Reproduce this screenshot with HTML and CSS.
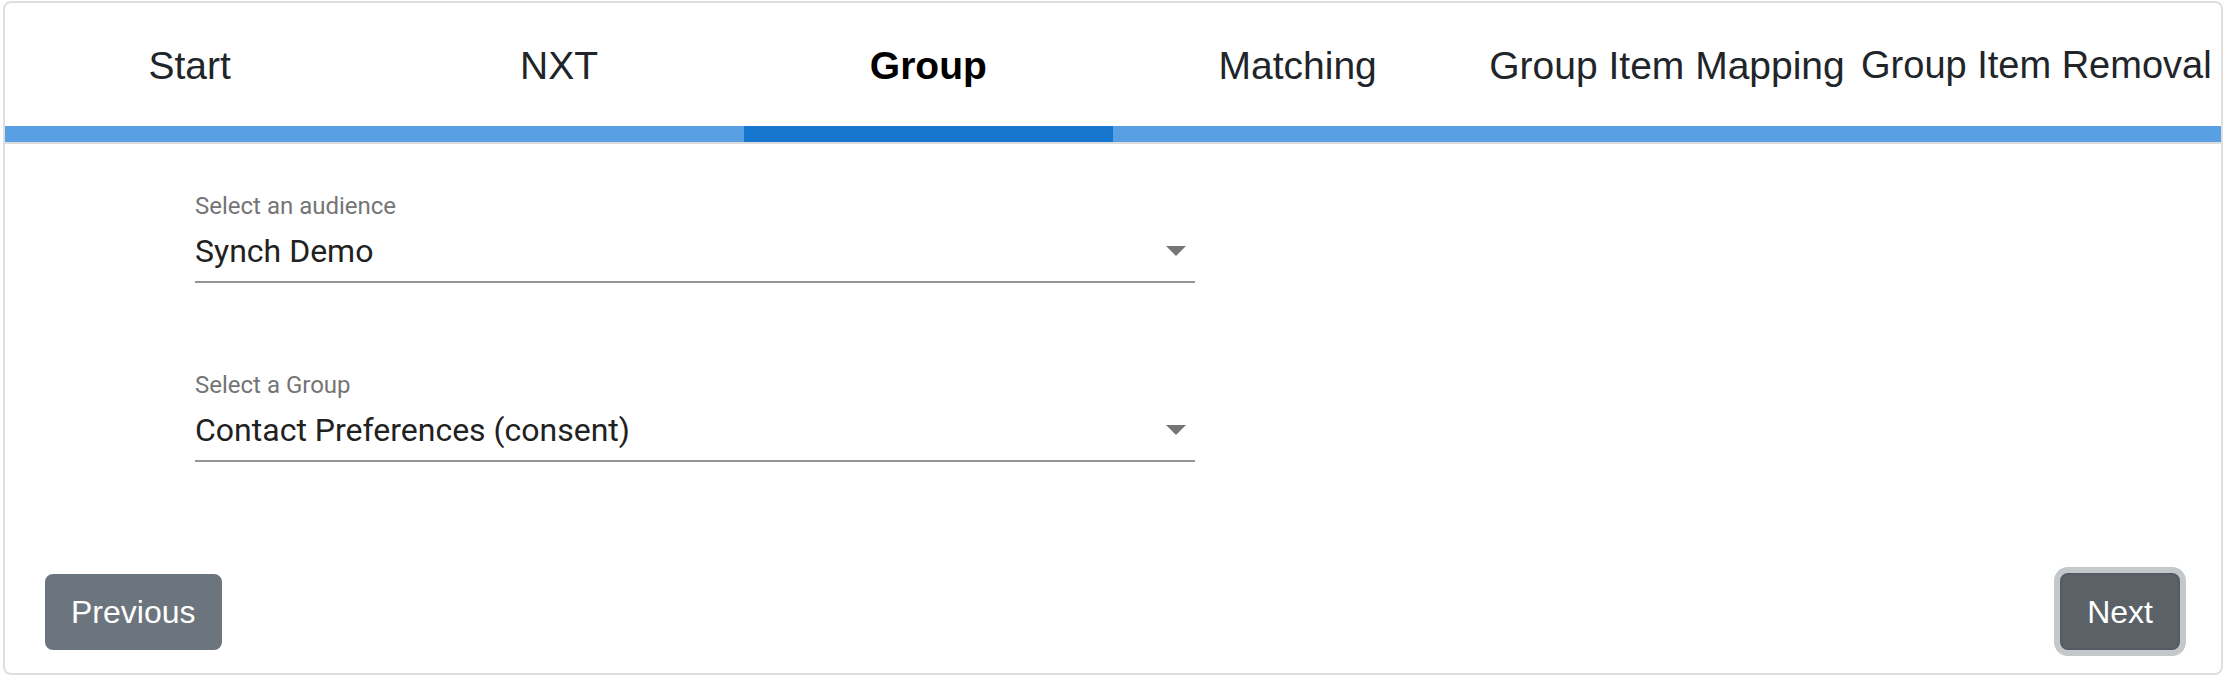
FILE: index.html
```html
<!DOCTYPE html>
<html lang="en">
<head>
<meta charset="utf-8">
<title>Group</title>
<link rel="stylesheet" href="styles.css">
</head>
<body>
<div class="page">
  <div class="card">
    <div class="steps">
      <div class="step">Start</div>
      <div class="step">NXT</div>
      <div class="step step-active">Group</div>
      <div class="step">Matching</div>
      <div class="step">Group Item Mapping</div>
      <div class="step step-narrow">Group Item Removal</div>
    </div>
    <div class="progress">
      <div class="seg"></div>
      <div class="seg"></div>
      <div class="seg seg-active"></div>
      <div class="seg"></div>
      <div class="seg"></div>
      <div class="seg"></div>
    </div>
    <div class="body">
      <div class="field">
        <div class="label">Select an audience</div>
        <div class="select">
          <span class="value">Synch Demo</span>
          <svg class="arrow" viewBox="0 0 20 10" width="20" height="10"><path d="M0 0h20L10 10z" fill="#757575"/></svg>
        </div>
      </div>
      <div class="field field-second">
        <div class="label">Select a Group</div>
        <div class="select">
          <span class="value">Contact Preferences (consent)</span>
          <svg class="arrow" viewBox="0 0 20 10" width="20" height="10"><path d="M0 0h20L10 10z" fill="#757575"/></svg>
        </div>
      </div>
    </div>
    <div class="footer">
      <button class="btn btn-prev" type="button">Previous</button>
      <button class="btn btn-next" type="button">Next</button>
    </div>
  </div>
</div>
</body>
</html>
```
FILE: styles.css
```css
html, body {
  margin: 0;
  padding: 0;
  background: #ffffff;
}

.page {
  padding: 1px 0 0 3px;
}

.card {
  box-sizing: border-box;
  width: 2220px;
  height: 674px;
  border: 2px solid #dfdfdf;
  border-radius: 8px;
  display: flex;
  flex-direction: column;
  overflow: hidden;
}

.steps {
  display: grid;
  grid-template-columns: repeat(6, 1fr);
  height: 123px;
  align-items: center;
  font-family: "Liberation Sans", Arial, sans-serif;
  font-size: 39px;
  color: #212529;
}

.step {
  text-align: center;
  white-space: nowrap;
  padding-top: 2px;
}

.step-narrow {
  font-size: 38px;
}

.step-active {
  font-weight: bold;
  color: #000000;
}

.progress {
  display: grid;
  grid-template-columns: repeat(6, 1fr);
  height: 16px;
  border-bottom: 2px solid #dcdcdc;
}

.seg {
  background: #58a0e3;
}

.seg-active {
  background: #1776cd;
}

.body {
  padding: 48px 0 0 190px;
  font-family: Roboto, "Noto Sans", sans-serif;
}

.field {
  width: 1000px;
}

.field-second {
  margin-top: 88px;
}

.label {
  font-size: 24px;
  line-height: 28px;
  color: #757575;
}

.select {
  display: flex;
  align-items: center;
  justify-content: space-between;
  padding: 12px 9px 11px 0;
  height: 38px;
  border-bottom: 2px solid #949494;
}

.value {
  font-size: 32px;
  line-height: 38px;
  color: #212121;
}

.arrow {
  display: block;
}

.footer {
  margin-top: 112px;
  padding: 0 40px;
  display: flex;
  justify-content: space-between;
  align-items: flex-start;
}

.btn {
  box-sizing: border-box;
  height: 76px;
  border: 2px solid transparent;
  border-radius: 8px;
  font-family: "Liberation Sans", Arial, sans-serif;
  font-size: 32px;
  line-height: 48px;
  color: #ffffff;
  padding: 0 24px;
}

.btn-prev {
  background: #6c757d;
  border-color: #6c757d;
}

.btn-next {
  background: #5a6268;
  border-color: #545b62;
  padding: 0 25px;
  height: 77px;
  margin-top: -1px;
  margin-right: 1px;
  box-shadow: 0 0 0 6px #c4c8cb;
}
```
